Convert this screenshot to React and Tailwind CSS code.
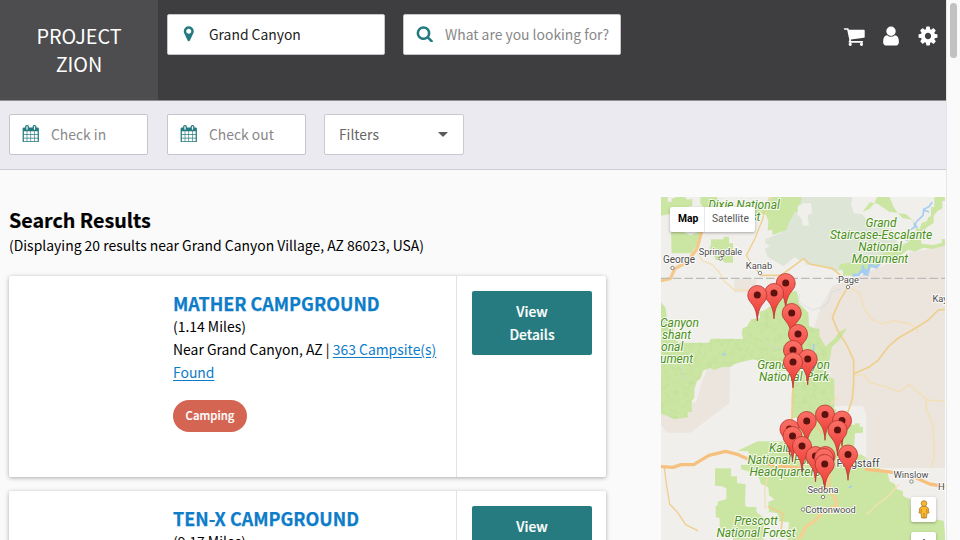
import React from "react";

const PATHS = {
  calendar:
    "M192 1664h288v-288h-288v288zm352 0h320v-288h-320v288zm-352-352h288v-320h-288v320zm352 0h320v-320h-320v320zm-352-384h288v-288h-288v288zm736 736h320v-288h-320v288zm-384-736h320v-288h-320v288zm768 736h288v-288h-288v288zm-384-352h320v-320h-320v320zm-352-864v-288q0-13-9.5-22.5t-22.5-9.5h-64q-13 0-22.5 9.5t-9.5 22.5v288q0 13 9.5 22.5t22.5 9.5h64q13 0 22.5-9.5t9.5-22.5zm736 864h288v-320h-288v320zm-384-384h320v-288h-320v288zm384 0h288v-288h-288v288zm32-480v-288q0-13-9.5-22.5t-22.5-9.5h-64q-13 0-22.5 9.5t-9.5 22.5v288q0 13 9.5 22.5t22.5 9.5h64q13 0 22.5-9.5t9.5-22.5zm384-64v1280q0 52-38 90t-90 38h-1408q-52 0-90-38t-38-90v-1280q0-52 38-90t90-38h128v-96q0-66 47-113t113-47h64q66 0 113 47t47 113v96h384v-96q0-66 47-113t113-47h64q66 0 113 47t47 113v96h128q52 0 90 38t38 90z",
  marker:
    "M1152 640q0-106-75-181t-181-75-181 75-75 181 75 181 181 75 181-75 75-181zm256 0q0 109-33 179l-364 774q-16 33-47.5 52t-67.5 19-67.5-19-46.5-52l-365-774q-33-70-33-179 0-212 150-362t362-150 362 150 150 362z",
  search:
    "M1216 832q0-185-131.5-316.5t-316.5-131.5-316.5 131.5-131.5 316.5 131.5 316.5 316.5 131.5 316.5-131.5 131.5-316.5zm512 832q0 52-38 90t-90 38q-54 0-90-38l-343-342q-179 124-399 124-143 0-273.5-55.5t-225-150-150-225-55.5-273.5 55.5-273.5 150-225 225-150 273.5-55.5 273.5 55.5 225 150 150 225 55.5 273.5q0 220-124 399l343 343q37 37 37 90z",
  cart:
    "M704 1536q0 52-38 90t-90 38-90-38-38-90 38-90 90-38 90 38 38 90zm896 0q0 52-38 90t-90 38-90-38-38-90 38-90 90-38 90 38 38 90zm128-1088v512q0 24-16.5 42.5t-40.5 21.5l-1044 122q13 60 13 70 0 16-24 64h920q26 0 45 19t19 45-19 45-45 19h-1024q-26 0-45-19t-19-45q0-11 8-31.5t16-36 21.5-40 15.5-29.5l-177-823h-204q-26 0-45-19t-19-45 19-45 45-19h256q16 0 28.5 6.5t19.5 15.5 13 24.5 8 26 5.5 29.5 4.5 26h1201q26 0 45 19t19 45z",
  user:
    "M1536 1399q0 109-62.5 187t-150.5 78h-854q-88 0-150.5-78t-62.5-187q0-85 8.5-160.5t31.5-152 58.5-131 94-89 134.5-34.5q131 128 313 128t313-128q76 0 134.5 34.5t94 89 58.5 131 31.5 152 8.5 160.5zm-256-887q0 159-112.5 271.5t-271.5 112.5-271.5-112.5-112.5-271.5 112.5-271.5 271.5-112.5 271.5 112.5 112.5 271.5z",
  cog:
    "M1152 896q0-106-75-181t-181-75-181 75-75 181 75 181 181 75 181-75 75-181zm512-109v222q0 12-8 23t-20 13l-185 28q-19 54-39 91 35 50 107 138 10 12 10 25t-9 23q-27 37-99 108t-94 71q-12 0-26-9l-138-108q-44 23-91 38-16 136-29 186-7 28-36 28h-222q-14 0-24.5-8.5t-11.5-21.5l-28-184q-49-16-90-37l-141 107q-10 9-25 9-14 0-25-11-126-114-165-168-7-10-7-23 0-12 8-23 15-21 51-66.5t54-70.5q-27-50-41-99l-183-27q-13-2-21-12.5t-8-23.5v-222q0-12 8-23t19-13l186-28q14-46 39-92-40-57-107-138-10-12-10-24 0-10 9-23 26-36 98.5-107.5t94.5-71.5q13 0 26 10l138 107q44-23 91-38 16-136 29-186 7-28 36-28h222q14 0 24.5 8.5t11.5 21.5l28 184q49 16 90 37l142-107q9-9 24-9 13 0 25 10 129 119 165 170 7 8 7 22 0 12-8 23-15 21-51 66.5t-54 70.5q26 50 41 98l183 28q13 2 21 12.5t8 23.5z",
};

function Icon({ name, className }) {
  return (
    <svg viewBox="0 0 1792 1792" className={className} fill="currentColor">
      <path d={PATHS[name]} />
    </svg>
  );
}

function Field({ icon, text, width, textClass }) {
  return (
    <div className={`flex h-[41px] items-center rounded-[2px] border border-[#c5c5cb] bg-white pb-px ${width}`}>
      <div className="flex w-[41px] shrink-0 justify-center pr-[0.5px] pb-px text-[#257a80]">
        <Icon name={icon} className="size-[17.5px]" />
      </div>
      <span className={`text-[13.9px] whitespace-nowrap ${textClass}`}>{text}</span>
    </div>
  );
}

function Header() {
  return (
    <header className="flex h-[101px] border-b border-[#8f8f92] bg-[#3e3e40]">
      <div className="flex w-[158px] flex-col bg-[#4d4d4f] pt-[22px] text-center text-[19.8px] leading-[28px] text-white">
        <span>PROJECT</span>
        <span>ZION</span>
      </div>
      <div className="flex gap-[18px] pt-[14px] pl-[9px]">
        <Field icon="marker" text="Grand Canyon" width="w-[218px]" textClass="text-[#222]" />
        <Field icon="search" text="What are you looking for?" width="w-[218px]" textClass="text-[#888]" />
      </div>
      <nav className="ml-auto flex gap-[14.5px] pt-[25px] pr-[7.5px] text-white">
        <Icon name="cart" className="size-[22.5px]" />
        <Icon name="user" className="size-[22px]" />
        <Icon name="cog" className="size-[22px]" />
      </nav>
    </header>
  );
}

function FilterBar() {
  return (
    <div className="flex h-[69px] gap-[19px] border-b border-[#cdcdd1] bg-[#ebeaf0] pt-[13px] pl-[9px]">
      <Field icon="calendar" text="Check in" width="w-[139px]" textClass="text-[#888]" />
      <Field icon="calendar" text="Check out" width="w-[139px]" textClass="text-[#888]" />
      <div className="-ml-[0.6px] flex h-[41px] w-[140px] items-center justify-between rounded-[2px] border border-[#c9c9cf] bg-white pr-[15px] pb-px pl-[13.5px]">
        <span className="text-[13.9px] text-[#666]">Filters</span>
        <svg viewBox="0 0 10 6" className="mt-[2px] h-[5.5px] w-[10px]" fill="#5a5a5a">
          <path d="M.4 0h9.2q.6.3.2.8L5.5 5q-.5.4-1 0L.2.8Q-.2.3.4 0z" />
        </svg>
      </div>
    </div>
  );
}

function Card({ title, miles, near, sites }) {
  return (
    <article className="flex h-[201px] shrink-0 rounded-[2px] bg-white shadow-[0_1px_4px_rgba(0,0,0,0.32)]">
      <div className="w-[447px] pt-[14px] pl-[164px]">
        <h3 className="text-[17.95px] leading-[26px] font-bold text-[#0d7cc9] [-webkit-text-stroke:0.25px_#0d7cc9]">{title}</h3>
        <div className="-mt-px text-[13.93px] leading-[22.9px]">
          <p>{miles}</p>
          <p>
            {near} | <a className="text-[#0d7cc9] underline underline-offset-[1.5px]">{sites}</a>
          </p>
        </div>
        <span className="mt-[16px] flex h-[32px] w-[74px] items-center justify-center rounded-full bg-[#d56553] pb-px text-[11.4px] font-medium text-white [-webkit-text-stroke:0.2px_white]">
          Camping
        </span>
      </div>
      <div className="flex-1 border-l border-[#e3e3e3] pt-[14.5px] pl-[15px]">
        <button className="flex h-[64px] w-[120px] flex-col items-center rounded-[2px] bg-[#267b80] pt-[9px] text-[13.8px] leading-[23px] font-medium text-white [-webkit-text-stroke:0.2px_white]">
          <span>View</span>
          <span>Details</span>
        </button>
      </div>
    </article>
  );
}

const PINS = [
  [785.7, 283], [774, 293], [757.3, 295], [791.7, 313], [798, 334], [793, 350], [807.7, 359],
  [793, 362], [825, 414.5], [842, 420.5], [806.7, 421], [789.5, 429], [837.5, 430], [792.5, 436],
  [802, 446], [848, 454.5], [815.5, 456], [825.5, 456], [824, 458], [824.7, 464],
];

// Terrain shapes are traced on a grid three times finer than the label coordinates.
const NATIONAL_PARKS = [
  "M18 21h20v14h12v-8l14-6h26l6 8 16-2v20l-30 8-40 18-24 4z",
  "M136 21h50l8 16-16 14-30 4-12-14z",
  "M48 126h38l20 10 28-12 4 16-10 22-20 28H50z",
  "M168 148h36l4-8h14v20h12v58h-24l-8-8h-20l-6-18h-12v-20l4-6z",
  "M300 52l40-12 10-19h30l30 2 6 14 2 34-16 26-8 24-42 14v-14h-14l2-28-8-20h-32z",
  "M378 21h62l-4 22-8 4v20l-20-4-10 14-12-18-8-16z",
  "M622 66l22-10 14-16 8-19h38l12 30 14 20 14 14 30 4 4 24 16 4 6-18 16-6 4-12 8-2v-28h10v-30h32v12h-8v22l-14 8-12 14v22l-22 14-6 24-12 4 4 20 34 4 26-6v-12h23v18l-40 8-8 4-30-4-26 12-20-6-26 20-38 10-26 16-26 12-26 6-22 14h-30l-2-16-12-4 4-14 34-6 50-18 40-6 80-36 24-34-6-30-24-20-50-8-36-24-22-4z",
  "M18 336l14 18 4 30 8 14 10 12 4 38 14 10h90l6-12h60l36 2-4-20 4-14 12-4 12-22 28-4-4-18 18-6 20-14 60-42h16l6 36 28 28 2 40 20 8h10l2 24 18 30 28-26 12-18 24-12-24 38-22 18-2 22-6 22-10 46 26 6v92h6v50h-76v-24h-58v-70l6-70-52-2-24-8-16-16-28-10-28 6-30 8-10 8-28 2-22 8-12-6-22 8-6 22-12 10-8 24v26l-8 8v34h-12v16l-40 6-26-12-18-4z",
  "M308 754h82l20-50h80l40-20 30 10 10 10h30v-4h14v10h10v18l-24 2-4 60 24 4 14 10 14 20 24 10 26 16 6 24 16 8 4 14 20 8v14l22 10v22l36 12 14 22 50 8 4 40 20 10 10 8h-502l4-54-30-2-4-24-26-4-2-30 18-8-16-12-2-24-22-10-10-30-50-14v-14h28l-6-40-32-2z",
  "M180 835h48v24h18v20l26 4-2 60 4 8h30v14l22 18v66h-92v-12l-14-18-26-4v-30l-12-4v-32l6-4v-10l26-8v-32l-14-6-20-2z",
];

const TAN_AREAS = [
  "M590 268l100-44 70-36 60-10 50-14v670H634v-160l-10-26h-90l-16-60-8-80-34-30 2-70 20-60 34-60z",
  "M18 650l106-14 18-66 24-54 32-28 28 20-2 130-118 90H36l-18-24z",
  "M238 268h66v40h-66z",
];

const GREEN_LABELS = [
  ["Dixie National", 744, 208.5], ["Forest", 744, 220.5],
  ["Grand", 881, 227], ["Staircase-Escalante", 881, 239], ["National", 880, 251], ["Monument", 880, 262.7],
  ["Grand Canyon", 793.5, 369], ["National Park", 794, 380.7],
  ["Kaibab", 787, 451.7], ["National Forest", 787, 463.7], ["Headquarters", 785, 475.7],
  ["Prescott", 756, 525], ["National Forest", 756, 536.7],
];

const TOWNS = [
  ["Springdale", 720.5, 254.5, 720.5, 258.5, 9.2], ["George", 679, 263, 672.5, 268, 10],
  ["Kanab", 759, 269, 760, 273, 9.3], ["Page", 848.5, 283, 848, 287, 9.3],
  ["Flagstaff", 858, 467, 0, 0, 10.8], ["Winslow", 911, 477.5, 911.5, 481.5, 9.3],
  ["Sedona", 823, 493, 823, 497, 9.3], ["Cottonwood", 830.5, 513, 803, 509.5, 9.3],
];

function Terrain() {
  return (
    <g transform="translate(655 190) scale(.33333)">
      {TAN_AREAS.map((d) => <path key={d} d={d} fill="#ebe5dd" />)}
      <path d="M416 21h176l-4 20 8 28 26 4 22 26 50 10 24 18 8 30-24 34-80 36-44 10-38 8-22-12-70-10-28-22-34 28-48-28-8-24 14-10-14-8 2-12 50-20 24-50z" fill="#dde5d6" />
      <path d="M428 50l16-10h24l4 28-14 8 4 30-18 2-4-22-14-14zM404 210h44l6 16 24 2-10 18-50 4z" fill="#f1efec" />
      <g fill="#cbe6a3">
        {NATIONAL_PARKS.map((d) => <path key={d} d={d} />)}
      </g>
      <g opacity=".2" filter="url(#relief)">
        <path d={NATIONAL_PARKS[7]} />
      </g>
      <g fill="none" stroke="#a5cdf2">
        <path d="M832 36l-10 14-16 8-2 18-20 20-6 16-20 12 4 14-22-8M806 60l16 6M776 100l12 14M770 136l-14 14-24-22M722 214l6-18" strokeWidth="5" />
        <path d="M700 208l-24 10-12 14-20-8-4 20-16-6-14 16-18 2M622 226l8 30M640 256l-18-14" strokeWidth="8" />
        <path d="M476 462v20M590 888l-8 6M212 496l-10-6" strokeWidth="5" />
      </g>
      <path d="M560 296l-30 10-10 30-20 16-26 8-28-14-16-16 4-18M330 450l20 20 24 4 26 22M60 500l20 30 10 40" fill="none" stroke="#cfd8dc" strokeWidth="2" />
      <g fill="none" strokeLinecap="round" strokeLinejoin="round">
        <g stroke="#f4dfb4" strokeWidth="4">
          <path d="M128 190l14 22 30 12 20 22 16 28 30 26h40M590 296l24 14 16 50 22 28 30 14 32-10 54 10 20 18v10M596 556l30-2 20 24 46 12 40 16 30-22 24 18 30 28 54 4M814 628v30l20 50 4 90-8 30M530 640l20-20M730 885l-30 34-40 30-24 24M345 835l-16 60 2 60" />
        </g>
        <g stroke="#efcf8c" strokeWidth="5">
          <path d="M318 256h60l68-50 18 16 70 14 26 24 20 24M578 292l-24 40-22 50 16 40 28 44 20 44v72l-4 44-20 60M870 358l-20 2-30 30-44 28-46 26-30 26-32 42-24 18-44 20M414 580l-4 130M340 950l44 20-6 50M470 690l30 40" />
          <path d="M346 21l-14 24-8 40-24 60-26 52 18 28 24 28" strokeWidth="4" />
          <path d="M28 832l6 50 10 60 24 26 24 36 36 18" strokeWidth="4" />
        </g>
        <path d="M144 110l-18 66-30 40-36 20-14 30-28 6" stroke="#f5c98b" strokeWidth="10" />
        <path d="M18 830l36 2 24-8h38l46-28 50-12 38 10 26 12 80 20 90 10M634 838l90 10 60 16 40 18 46 8" stroke="#f6c17f" strokeWidth="10" />
        <path d="M522 850v50l22 30v18l-32 12-34 34-24 14-20 36" stroke="#f7cf90" strokeWidth="9" />
      </g>
      <path d="M18 265h852" stroke="#bdbbb9" strokeWidth="3.5" strokeDasharray="26 9" />
    </g>
  );
}

function MapPanel() {
  return (
    <div className="relative h-[343px] w-[284px] overflow-hidden font-['Roboto',sans-serif]">
      <svg viewBox="661 197 284 343" className="block h-[343px] w-[284px]">
        <defs>
          <linearGradient id="pin" x1="0" y1="0" x2="0" y2="1">
            <stop offset="0" stopColor="#fb7167" />
            <stop offset="1" stopColor="#ea352f" />
          </linearGradient>
          <filter id="relief" x="0" y="0" width="1" height="1">
            <feTurbulence type="fractalNoise" baseFrequency="0.07" numOctaves="3" seed="4" />
            <feColorMatrix values="0 0 0 0 .35  0 0 0 0 .55  0 0 0 0 .2  0 2.2 0 0 -1" />
            <feComposite in2="SourceGraphic" operator="in" />
          </filter>
        </defs>
        <rect x="661" y="197" width="284" height="343" fill="#f1efec" />
        <Terrain />
        <g fill="#4b8e1f" stroke="#f7fbee" strokeWidth="2" paintOrder="stroke" fontStyle="italic" fontSize="12" textAnchor="middle">
          {GREEN_LABELS.map(([t, x, y]) => <text key={t + y} x={x} y={y}>{t}</text>)}
        </g>
        <g fill="#4b8e1f" stroke="#f7fbee" strokeWidth="2" paintOrder="stroke" fontStyle="italic" fontSize="12">
          <text x="660" y="327">Canyon</text>
          <text x="662" y="339">shant</text>
          <text x="661" y="351">onal</text>
          <text x="660" y="362.7">ument</text>
        </g>
        <g fill="#4a4a4a" stroke="#fff" strokeWidth="1.6" paintOrder="stroke" textAnchor="middle">
          {TOWNS.map(([t, x, y, , , s]) => <text key={t} x={x} y={y} fontSize={s}>{t}</text>)}
          <text x="932.5" y="302" textAnchor="start" fontSize="9.3">Kay</text>
          <text x="938" y="489.5" textAnchor="start" fontSize="9.3">H</text>
        </g>
        <g fill="#fff" stroke="#777" strokeWidth=".9">
          {TOWNS.filter((t) => t[3]).map(([t, , , x, y]) => <circle key={t} cx={x} cy={y} r="1.7" />)}
        </g>
        {PINS.map(([x, y]) => (
          <g key={`${x}-${y}`} transform={`translate(${x} ${y})`}>
            <path
              d="M0 25.8C-.8 15-3.2 11.5-6.5 7.5C-8.5 5-9.5 3-9.5 0A9.5 9.5 0 0 1 9.5 0C9.5 3 8.5 5 6.5 7.5C3.2 11.5 .8 15 0 25.8z"
              fill="url(#pin)" stroke="#b5342e" strokeWidth=".8"
            />
            <circle r="3.5" fill="#5c120f" />
          </g>
        ))}
      </svg>
      <div className="absolute top-[10px] left-[9px] flex h-[25px] rounded-[2px] bg-white text-[10.3px] leading-[24px] shadow-[0_1px_3px_rgba(0,0,0,0.3)]">
        <span className="w-[35px] border-r border-[#e8e8e8] pl-[8px] font-bold text-black">Map</span>
        <span className="w-[50px] pl-[7px] text-[#565656]">Satellite</span>
      </div>
      <div className="absolute top-[300px] left-[250px] flex size-[25px] items-center justify-center rounded-[2px] bg-white shadow-[0_1px_3px_rgba(0,0,0,0.3)]">
        <svg viewBox="0 0 12 19" className="h-[19px] w-[12px]" fill="#fbb829" stroke="#a87a35" strokeWidth=".8">
          <path d="M4 6.5h4l2.2 1.5.8 5H9l-.6 5H3.6l-.6-5H1l.8-5z" />
          <circle cx="6" cy="3.5" r="2.8" />
          <path d="M6 13v5M3.2 9v3.5M8.8 9v3.5" />
        </svg>
      </div>
      <div className="absolute top-[335px] left-[250px] flex h-[25px] w-[25px] justify-center rounded-[2px] bg-white pt-[7px] shadow-[0_1px_3px_rgba(0,0,0,0.3)]">
        <span className="h-3 w-[2px] bg-[#777]" />
      </div>
    </div>
  );
}

export default function App() {
  return (
    <div className="flex h-[540px] w-[960px] overflow-hidden bg-[#fafafa] font-['Noto_Sans_CJK_SC',sans-serif] text-black">
      <div className="flex w-[946px] flex-col">
        <Header />
        <FilterBar />
        <main className="flex min-h-0 flex-1 overflow-hidden pl-[9px]">
          <section className="w-[597px] pt-[36px]">
            <h2 className="text-[19.7px] leading-[28px] font-bold [-webkit-text-stroke:0.2px_black]">Search Results</h2>
            <p className="text-[13.93px] leading-[23px] whitespace-nowrap">
              (Displaying 20 results near Grand Canyon Village, AZ 86023, USA)
            </p>
            <div className="mt-[19px] flex flex-col gap-[14px]">
              <Card title="MATHER CAMPGROUND" miles="(1.14 Miles)" near="Near Grand Canyon, AZ" sites="363 Campsite(s) Found" />
              <Card title="TEN-X CAMPGROUND" miles="(9.17 Miles)" near="Near Tusayan, AZ" sites="70 Campsite(s) Found" />
            </div>
          </section>
          <aside className="pt-[27px] pl-[55px]">
            <MapPanel />
          </aside>
        </main>
      </div>
      <div className="w-[14px] border-l border-[#e6e6ea] bg-[#fafafa] pt-[3px] pl-[3px]">
        <div className="h-[55px] w-[7px] rounded-full bg-[#c1c1c1]" />
      </div>
    </div>
  );
}
